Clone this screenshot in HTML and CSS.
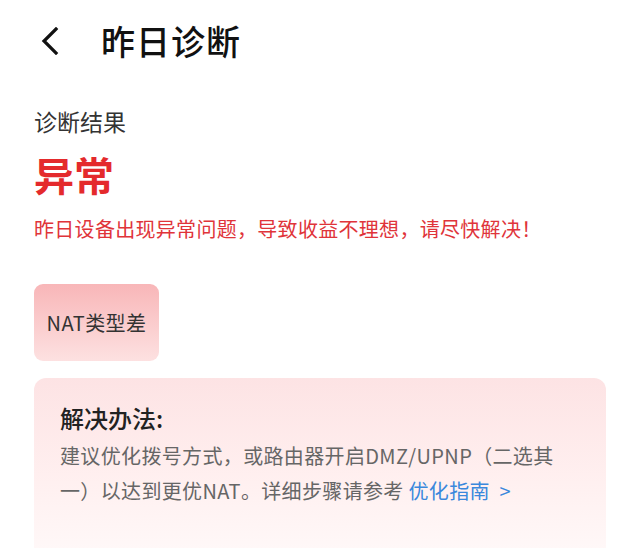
FILE: index.html
```html
<!DOCTYPE html>
<html lang="zh-CN">
<head>
<meta charset="utf-8">
<link rel="stylesheet" href="styles.css">
</head>
<body>
<div class="page">
  <header class="header">
    <svg class="back" width="20" height="28" viewBox="0 0 20 28"><path d="M16 2 L4 14 L16 26" fill="none" stroke="#111" stroke-width="3.2" stroke-linecap="square"/></svg>
    <h1 class="title">昨日诊断</h1>
  </header>
  <div class="subtitle">诊断结果</div>
  <div class="status">异常</div>
  <div class="desc">昨日设备出现异常问题，导致收益不理想，请尽快解决！</div>
  <div class="badge">NAT类型差</div>
  <div class="card">
    <div class="card-title">解决办法:</div>
    <p class="card-body">建议优化拨号方式，或路由器开启DMZ/UPNP（二选其一）以达到更优NAT。详细步骤请参考 <span class="link">优化指南&nbsp;&nbsp;&gt;</span></p>
  </div>
</div>
</body>
</html>
```
FILE: styles.css
```css
* { box-sizing: border-box; }
html, body { margin: 0; padding: 0; background: #fff; }
body {
  font-family: "Noto Sans CJK SC", sans-serif;
  width: 640px;
  height: 548px;
  overflow: hidden;
}
.page { padding: 0 34px; }
.header {
  height: 82px;
  display: flex;
  align-items: center;
}
.back { margin-left: 6px; flex: none; }
.title {
  margin: 0 0 0 41px;
  font-size: 34px;
  line-height: 40px;
  font-weight: 500;
  color: #111;
  letter-spacing: 1px;
}
.subtitle {
  margin-top: 24px;
  font-size: 23px;
  line-height: 30px;
  color: #333;
}
.status {
  margin-top: 14px;
  font-size: 40px;
  line-height: 48px;
  font-weight: 700;
  color: #e42a2c;
}
.desc {
  margin-top: 17px;
  font-size: 20px;
  line-height: 28px;
  color: #e0343a;
  letter-spacing: 0.3px;
}
.badge {
  margin-top: 41px;
  width: 125px;
  height: 77px;
  border-radius: 9px;
  background: linear-gradient(180deg, #f8b6b8 0%, #fde1e1 100%);
  display: flex;
  align-items: center;
  justify-content: center;
  font-size: 20px;
  color: #333;
  letter-spacing: 0.4px;
}
.card {
  margin-top: 17px;
  width: 572px;
  height: 190px;
  border-radius: 12px;
  background: linear-gradient(180deg, #fde3e4 0%, #fff0f0 55%, #fffafa 100%);
  padding: 23px 36px 0 26px;
}
.card-title {
  font-size: 24px;
  line-height: 34px;
  font-weight: 500;
  color: #222;
}
.card-body {
  margin: 3px 0 0;
  font-size: 20px;
  line-height: 35px;
  color: #666;
  letter-spacing: 0.35px;
}
.link { color: #3a88dc; }
```
